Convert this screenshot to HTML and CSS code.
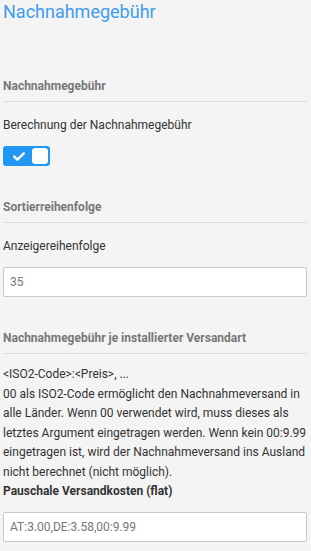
FILE: index.html
```html
<!DOCTYPE html>
<html lang="de">
<head>
    <meta charset="UTF-8">
    <meta name="viewport" content="width=device-width, initial-scale=1.0">
    <title>Nachnahmegebühr</title>
    <link rel="stylesheet" href="styles.css">
</head>
<body>
    <div id="module-config">
        <h1 class="page-title">Nachnahmegebühr</h1>

        <div class="section">
            <h4 class="section-title">Nachnahmegebühr</h4>
            <div class="field">
                <label>Berechnung der Nachnahmegebühr</label>
                <div class="switch">
                    <span class="switch-check">
                        <svg width="12" height="9" viewBox="0 0 12 9">
                            <path d="M1.2 4.6 L4.4 7.6 L10.8 1.4" fill="none" stroke="#fff" stroke-width="2.4" stroke-linecap="round" stroke-linejoin="round"/>
                        </svg>
                    </span>
                    <span class="switch-knob"></span>
                </div>
            </div>
        </div>

        <div class="section">
            <h4 class="section-title">Sortierreihenfolge</h4>
            <div class="field">
                <label>Anzeigereihenfolge</label>
                <input class="text-input" type="text" value="35">
            </div>
        </div>

        <div class="section">
            <h4 class="section-title">Nachnahmegebühr je installierter Versandart</h4>
            <div class="field field-help">
                <p class="help">&lt;ISO2-Code&gt;:&lt;Preis&gt;, ...<br>00 als ISO2-Code ermöglicht den Nachnahmeversand in alle Länder. Wenn 00 verwendet wird, muss dieses als letztes Argument eingetragen werden. Wenn kein 00:9.99 eingetragen ist, wird der Nachnahmeversand ins Ausland nicht berechnet (nicht möglich).</p>
                <label class="strong">Pauschale Versandkosten (flat)</label>
                <input class="text-input" type="text" value="AT:3.00,DE:3.58,00:9.99">
            </div>
        </div>
    </div>
</body>
</html>
```

FILE: styles.css
```css
body {
    font-family: Roboto, "Liberation Sans", Arial, sans-serif;
    background-color: #f4f4f4;
    color: #333;
    margin: 0;
    padding: 0 4px 0 3px;
    font-size: 12px;
}
.page-title {
    font-size: 18px;
    line-height: 24px;
    font-weight: 400;
    color: #3f9cf0;
    margin: 0 0 52px;
}
.section-title {
    font-size: 12px;
    line-height: 20px;
    font-weight: 700;
    color: #777;
    margin: 31px 0 0;
    padding-bottom: 5px;
    border-bottom: 1px solid #ddd;
}
.field {
    margin-top: 13px;
}
.field-help {
    margin-top: 11px;
}
.field label {
    display: block;
    line-height: 20px;
}
.field label.strong {
    font-weight: 700;
    line-height: 19.5px;
}
.help {
    margin: 0;
    line-height: 19.5px;
}
.switch {
    display: flex;
    align-items: center;
    justify-content: space-between;
    width: 47px;
    height: 20px;
    margin-top: 11px;
    padding: 2px;
    box-sizing: border-box;
    background-color: #2196f3;
    border-radius: 3px;
}
.switch-check {
    display: flex;
    padding-left: 8px;
}
.switch-knob {
    width: 16px;
    height: 16px;
    background-color: #fff;
    border-radius: 3px;
}
.text-input {
    display: block;
    width: 100%;
    height: 30px;
    box-sizing: border-box;
    margin-top: 11px;
    padding: 0 6px;
    border: 1px solid #c8c8c8;
    border-radius: 2px;
    background-color: #fff;
    font-family: inherit;
    font-size: 12px;
    color: #777;
}
.field-help .text-input {
    margin-top: 10px;
}
```
